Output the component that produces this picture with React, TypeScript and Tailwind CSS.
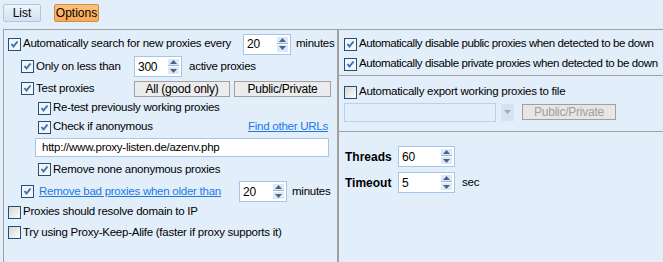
import React from 'react';

const font = { fontFamily: '"Liberation Sans", Arial, sans-serif' };

function Check({ checked }: { checked?: boolean }) {
  return (
    <span
      className={
        'relative inline-block h-[13px] w-[13px] shrink-0 border border-[#1c5180] ' +
        (checked ? 'bg-[#f4f4f4]' : 'bg-gradient-to-br from-[#d8d8d2] to-[#fbfbf9]')
      }>
      {checked && (
        <svg width="11" height="11" viewBox="0 0 11 11" className="absolute left-0 top-0">
          <path d="M2.5 5 L4.5 7.5 L8.5 2.5" stroke="#3a70c0" strokeWidth="2" fill="none" />
        </svg>
      )}
    </span>
  );
}

function Spin({ value, className = '' }: { value: string; className?: string }) {
  return (
    <div
      className={
        'flex h-[21px] w-[48px] shrink-0 items-center justify-between border border-[#a5c6ea] bg-white pl-[3px] pr-[2px] ' +
        className
      }>
      <span className="text-[12px] leading-none text-black">{value}</span>
      <div className="flex flex-col gap-px">
        <span className="flex h-[7px] w-[11px] items-center justify-center border-b border-[#9ab6d8] bg-[#dbe8f7]">
          <svg width="7" height="4" viewBox="0 0 7 4">
            <path d="M0 4 L3.5 0 L7 4 Z" fill="#4d6185" />
          </svg>
        </span>
        <span className="flex h-[7px] w-[11px] items-center justify-center bg-[#dbe8f7]">
          <svg width="7" height="4" viewBox="0 0 7 4">
            <path d="M0 0 L7 0 L3.5 4 Z" fill="#4d6185" />
          </svg>
        </span>
      </div>
    </div>
  );
}

function Btn({ children, className = '', disabled }: { children: React.ReactNode; className?: string; disabled?: boolean }) {
  return (
    <div
      className={
        'flex h-[16px] shrink-0 items-center justify-center whitespace-nowrap border border-[#a0a0a0] text-[12px] leading-none ' +
        (disabled ? 'bg-[#e6e6e6] text-[#a0a0a0] ' : 'bg-[#ececec] text-black ') +
        className
      }>
      {children}
    </div>
  );
}

export default function App() {
  return (
    <div
      className="h-[262px] w-[663px] overflow-hidden whitespace-nowrap bg-[#e3eefb] text-[11.5px] tracking-[-0.25px] text-black"
      style={font}>
      <div className="flex h-[29px] items-start gap-[13px] pl-[3px] pt-[4px] text-[12px] tracking-normal">
        <div className="flex h-[18px] w-[38px] items-center justify-center rounded-[2px] border border-[#b6c6da] bg-gradient-to-b from-[#eef4fb] to-[#d3e1f1]">
          List
        </div>
        <div className="flex h-[18px] w-[45px] items-center justify-center rounded-[2px] border border-[#c9904a] bg-gradient-to-b from-[#ffc07a] to-[#fba654]">
          Options
        </div>
      </div>

      <div className="flex h-[233px]">
        <div className="ml-[3px] flex w-[335px] shrink-0 flex-col border-l border-t border-r border-[#a0a0a0] pt-[3px]">
          <div className="flex h-[22px] items-center pl-[4px]">
            <Check checked />
            <span className="ml-[2px] w-[220px]">Automatically search for new proxies every</span>
            <Spin value="20" />
            <span className="ml-[5px]">minutes</span>
          </div>
          <div className="flex h-[23px] items-center pl-[17px]">
            <Check checked />
            <span className="ml-[2px] w-[98px]">Only on less than</span>
            <Spin value="300" />
            <span className="ml-[7px]">active proxies</span>
          </div>
          <div className="flex h-[21px] items-center pl-[17px]">
            <Check checked />
            <span className="ml-[2px] w-[98px]">Test proxies</span>
            <Btn className="w-[96px]">All (good only)</Btn>
            <Btn className="ml-[4px] w-[97px]">Public/Private</Btn>
          </div>
          <div className="flex h-[18px] items-center pl-[34px]">
            <Check checked />
            <span className="ml-[2px]">Re-test previously working proxies</span>
          </div>
          <div className="flex h-[20px] items-center pl-[34px]">
            <Check checked />
            <span className="ml-[2px] flex-1">Check if anonymous</span>
            <span className="mr-[9px] text-[#1a7ae8] underline">Find other URLs</span>
          </div>
          <div className="flex h-[21px] items-center pl-[31px]">
            <div className="flex h-[19px] w-[294px] items-center border border-[#a5c6ea] bg-white pl-[6px]">
              http://www.proxy-listen.de/azenv.php
            </div>
          </div>
          <div className="flex h-[23px] items-center pl-[34px]">
            <Check checked />
            <span className="ml-[2px]">Remove none anonymous proxies</span>
          </div>
          <div className="flex h-[21px] items-center pl-[17px]">
            <Check checked />
            <span className="ml-[5px] w-[200px] text-[#1a7ae8] underline">Remove bad proxies when older than</span>
            <Spin value="20" />
            <span className="ml-[5px]">minutes</span>
          </div>
          <div className="flex h-[20px] items-center pl-[4px]">
            <Check />
            <span className="ml-[2px]">Proxies should resolve domain to IP</span>
          </div>
          <div className="flex h-[21px] items-center pl-[4px]">
            <Check />
            <span className="ml-[2px]">Try using Proxy-Keep-Alife (faster if proxy supports it)</span>
          </div>
        </div>

        <div className="flex min-w-0 flex-1 flex-col border-l border-t border-[#a0a0a0]">
          <div className="flex flex-col border-b border-[#a0a0a0] pb-[1px] pl-[5px] pt-[4px] tracking-[-0.4px]">
            <div className="flex h-[20px] items-center">
              <Check checked />
              <span className="ml-[2px]">Automatically disable public proxies when detected to be down</span>
            </div>
            <div className="flex h-[20px] items-center">
              <Check checked />
              <span className="ml-[2px]">Automatically disable private proxies when detected to be down</span>
            </div>
          </div>
          <div className="flex flex-col border-b border-[#a0a0a0] pb-[9px] pl-[5px] pt-[6px]">
            <div className="flex h-[20px] items-center">
              <Check />
              <span className="ml-[2px]">Automatically export working proxies to file</span>
            </div>
            <div className="flex h-[20px] items-center">
              <div className="h-[19px] w-[152px] border border-[#b8d0ec] bg-[#e3eefb]" />
              <div className="ml-[5px] flex h-[17px] w-[13px] items-center justify-center bg-[#d6e2f0]">
                <svg width="7" height="4" viewBox="0 0 7 4">
                  <path d="M0 0 L7 0 L3.5 4 Z" fill="#9aaac0" />
                </svg>
              </div>
              <Btn disabled className="ml-[8px] w-[94px]">Public/Private</Btn>
            </div>
          </div>
          <div className="flex flex-col gap-[5px] pl-[6px] pt-[14px]">
            <div className="flex h-[21px] items-center">
              <span className="w-[53px] text-[12px] font-bold tracking-normal">Threads</span>
              <Spin value="60" className="w-[57px]" />
            </div>
            <div className="flex h-[21px] items-center">
              <span className="w-[53px] text-[12px] font-bold tracking-normal">Timeout</span>
              <Spin value="5" className="w-[57px]" />
              <span className="ml-[7px]">sec</span>
            </div>
          </div>
        </div>
      </div>
    </div>
  );
}
